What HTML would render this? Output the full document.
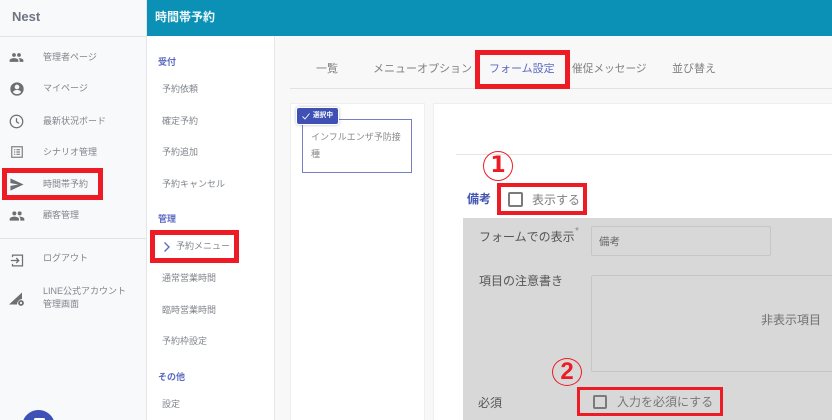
<!DOCTYPE html>
<html lang="ja"><head><meta charset="utf-8">
<style>
html,body{margin:0;padding:0;width:832px;height:420px;overflow:hidden}
body{position:relative;background:#f8f8f8;font-family:"Liberation Sans","Noto Sans CJK JP",sans-serif}
#w{position:absolute;left:0;top:0;width:832px;height:420px;overflow:hidden}
.a{position:absolute;box-sizing:border-box}
.t{position:absolute;white-space:nowrap;line-height:16px;font-size:9px;color:#80858c}
.r{position:absolute;box-sizing:border-box;border:5px solid #ed1c24}
svg{position:absolute}
</style></head><body><div id="w">
<div class="a" style="left:0;top:0;width:147px;height:420px;background:#f8f9fb;border-right:1px solid #e4e4e6"></div>
<div class="a" style="left:0;top:36px;width:146px;height:1px;background:#e4e4e6"></div>
<div class="a" style="left:147px;top:0;width:685px;height:36px;background:#0a91b5"></div>
<div class="a" style="left:147px;top:36px;width:128px;height:384px;background:#fff;border-right:1px solid #e8e8e8"></div>

<div class="t" style="left:12px;top:9px;font-size:13px;font-weight:bold;color:#6e7580">Nest</div>
<div class="t" style="left:155px;top:9px;font-size:12px;font-weight:bold;color:#eef8fb">時間帯予約</div>

<!-- sidebar icons -->
<svg style="left:9px;top:50px" width="15" height="15" viewBox="0 0 24 24" fill="#6d6f73"><path d="M16 11a3 3 0 1 0 0-6 3 3 0 0 0 0 6zm-8 0a3 3 0 1 0 0-6 3 3 0 0 0 0 6zm0 2c-2.300 0-7 1.200-7 3.500V19h14v-2.500C15 14.200 10.300 13 8 13zm8 0h-1c1.200.8 2 2 2 3.500V19h6v-2.500c0-2.300-4.700-3.500-7-3.500z"/></svg>
<svg style="left:9px;top:81px" width="16" height="16" viewBox="0 0 24 24" fill="#6d6f73"><path d="M12 2a10 10 0 1 0 0 20 10 10 0 0 0 0-20zm0 3.500a3.500 3.500 0 1 1 0 7 3.500 3.500 0 0 1 0-7zM12 19.600a7.600 7.600 0 0 1-6-3c.1-2 4-3.100 6-3.100s5.900 1.100 6 3.100a7.600 7.600 0 0 1-6 3z"/></svg>
<svg style="left:9px;top:114px" width="15" height="15" viewBox="0 0 24 24" fill="none" stroke="#6d6f73" stroke-width="2"><circle cx="12" cy="12" r="10"/><path d="M12 6.500V12.500L16 15"/></svg>
<svg style="left:10px;top:145px" width="14" height="14" viewBox="0 0 24 24" fill="none" stroke="#7a7c80" stroke-width="2"><rect x="3" y="3" width="18" height="18"/><path d="M7 8h2M11 8h6M7 12h2M11 12h6M7 16h2M11 16h6"/></svg>
<svg style="left:9px;top:175px" width="16" height="19" viewBox="0 0 17 20" fill="#6d6f73"><path d="M1.500 3.500 15.500 10 1.500 16.500V11.500L10 10 1.500 8.500z"/></svg>
<svg style="left:9px;top:208px" width="16" height="16" viewBox="0 0 24 24" fill="#6d6f73"><path d="M16 11a3 3 0 1 0 0-6 3 3 0 0 0 0 6zm-8 0a3 3 0 1 0 0-6 3 3 0 0 0 0 6zm0 2c-2.300 0-7 1.200-7 3.500V19h14v-2.500C15 14.200 10.300 13 8 13zm8 0h-1c1.200.8 2 2 2 3.500V19h6v-2.500c0-2.300-4.700-3.500-7-3.500z"/></svg>
<svg style="left:10px;top:253px" width="15" height="15" viewBox="0 0 18 18" fill="none" stroke="#6d6f73" stroke-width="1.500"><path d="M3 5V2.500H15V15.500H3V13"/><path d="M1 9H10M7.500 6 10.500 9 7.500 12"/></svg>
<svg style="left:8px;top:291px" width="18" height="18" viewBox="0 0 18 18" fill="#6d6f73"><path d="M1 13.500 14 1.500V8A5.500 5.500 0 0 0 9 13.500z"/><circle cx="13" cy="12" r="2" fill="none" stroke="#6d6f73" stroke-width="1.800"/></svg>

<div class="t" style="left:43px;top:49px">管理者ページ</div>
<div class="t" style="left:43px;top:80px">マイページ</div>
<div class="t" style="left:43px;top:113px">最新状況ボード</div>
<div class="t" style="left:43px;top:144px">シナリオ管理</div>
<div class="t" style="left:43px;top:176px">時間帯予約</div>
<div class="t" style="left:43px;top:207px">顧客管理</div>
<div class="a" style="left:0;top:238px;width:146px;height:1px;background:#e2e2e4"></div>
<div class="t" style="left:43px;top:250px">ログアウト</div>
<div class="t" style="left:43px;top:283px">LINE公式アカウント</div>
<div class="t" style="left:43px;top:296px">管理画面</div>
<svg style="left:22px;top:410px" width="33" height="10" viewBox="0 0 33 10"><path d="M1.330 10A16.500 16.500 0 0 1 31.670 10Z" fill="#3f51b5"/><path d="M12 10V9.500Q12 8 13.500 8H21.500Q23 8 23 9.500V10Z" fill="#fff"/></svg>

<!-- second column -->
<div class="t" style="left:158px;top:54px;color:#5c6bc0;font-weight:bold">受付</div>
<div class="t" style="left:162px;top:81px">予約依頼</div>
<div class="t" style="left:162px;top:113px">確定予約</div>
<div class="t" style="left:162px;top:144px">予約追加</div>
<div class="t" style="left:162px;top:176px">予約キャンセル</div>
<div class="t" style="left:158px;top:211px;color:#5c6bc0;font-weight:bold">管理</div>
<svg style="left:163px;top:241px" width="8" height="12" viewBox="0 0 8 12" fill="none" stroke="#5c6bc0" stroke-width="1.400"><path d="M1.500 1.500 6 6 1.500 10.500"/></svg>
<div class="t" style="left:176px;top:238px">予約メニュー</div>
<div class="t" style="left:162px;top:270px">通常営業時間</div>
<div class="t" style="left:162px;top:302px">臨時営業時間</div>
<div class="t" style="left:162px;top:333px">予約枠設定</div>
<div class="t" style="left:158px;top:369px;color:#5c6bc0;font-weight:bold">その他</div>
<div class="t" style="left:162px;top:396px">設定</div>

<!-- tabs -->
<div class="t" style="left:316px;top:61px;font-size:11px;color:#808080">一覧</div>
<div class="t" style="left:373px;top:61px;font-size:11px;color:#808080">メニューオプション</div>
<div class="t" style="left:489px;top:61px;font-size:11px;color:#5c6bc0">フォーム設定</div>
<div class="t" style="left:572px;top:61px;font-size:10.700px;color:#808080">催促メッセージ</div>
<div class="t" style="left:672px;top:61px;font-size:11px;color:#808080">並び替え</div>
<div class="a" style="left:290px;top:88px;width:542px;height:1px;background:#e2e2e2"></div>

<!-- left card -->
<div class="a" style="left:290px;top:103px;width:135px;height:317px;background:#fff;border:1px solid #eeeeee;border-bottom:0"></div>
<div class="a" style="left:302px;top:119px;width:110px;height:54px;background:#fff;border:1px solid #7580c4"></div>
<div class="t" style="left:311px;top:129px;font-size:9px;color:#8a8a8a">インフルエンザ予防接</div>
<div class="t" style="left:311px;top:146px;font-size:9px;color:#8a8a8a">種</div>
<div class="a" style="left:297px;top:108px;width:41px;height:16px;background:#3f51b5;border-radius:2px;box-shadow:0 0 0 1px #fff,0 0 3px 1px rgba(0,0,0,.25)"></div>
<svg style="left:301px;top:111px" width="10" height="10" viewBox="0 0 10 10" fill="none" stroke="#fff" stroke-width=".9"><path d="M1.500 5.500 4 8 8.500 2.500"/></svg>
<div class="t" style="left:313px;top:108px;font-size:6.700px;font-weight:bold;color:#fff">選択中</div>

<!-- main card -->
<div class="a" style="left:433px;top:103px;width:399px;height:317px;background:#fff;border:1px solid #eeeeee;border-right:0;border-bottom:0"></div>
<div class="a" style="left:456px;top:154px;width:376px;height:1px;background:#e4e4e4"></div>
<div class="t" style="left:467px;top:191px;font-size:12px;font-weight:bold;color:#4355b0">備考</div>
<div class="a" style="left:508px;top:192px;width:15px;height:15px;border:2px solid #7a7a7a;border-radius:2px"></div>
<div class="t" style="left:532px;top:192px;font-size:12px;color:#7d7d7d">表示する</div>

<!-- grey panel -->
<div class="a" style="left:463px;top:218px;width:369px;height:202px;background:#d8d8d8"></div>
<div class="t" style="left:479px;top:229px;font-size:12px;color:#555">フォームでの表示</div>
<div class="t" style="left:575px;top:224px;font-size:10px;color:#888">*</div>
<div class="a" style="left:591px;top:226px;width:180px;height:30px;border:1px solid #c6c6c6;border-radius:2px"></div>
<div class="t" style="left:599px;top:234px;font-size:10.500px;color:#666">備考</div>
<div class="t" style="left:479px;top:273px;font-size:12px;color:#555">項目の注意書き</div>
<div class="a" style="left:591px;top:275px;width:241px;height:97px;border:1px solid #c6c6c6;border-right:0;border-radius:2px 0 0 2px"></div>
<div class="t" style="left:761px;top:312px;font-size:12px;color:#707070">非表示項目</div>
<div class="t" style="left:478px;top:395px;font-size:12px;color:#555">必須</div>
<div class="a" style="left:593px;top:395px;width:14px;height:14px;border:2px solid #7a7a7a;border-radius:2px"></div>
<div class="t" style="left:617px;top:394px;font-size:12px;color:#777">入力を必須にする</div>

<!-- red annotations -->
<div class="r" style="left:2px;top:168px;width:101px;height:32px"></div>
<div class="r" style="left:150px;top:230px;width:89px;height:33px"></div>
<div class="r" style="left:475px;top:50px;width:95px;height:39px"></div>
<div class="r" style="left:497px;top:183px;width:90px;height:32px;border-width:4px"></div>
<div class="r" style="left:577px;top:387px;width:146px;height:29px;border-width:3px"></div>
<div class="a" style="left:483px;top:151px;width:30px;height:30px;border:1px solid #ed1c24;border-radius:50%"></div>
<div class="t" style="left:483px;top:151px;width:30px;line-height:30px;text-align:center;font-family:'DejaVu Sans',sans-serif;font-size:22px;font-weight:bold;color:#ed1c24">1</div>
<div class="a" style="left:552px;top:358px;width:30px;height:28px;border:1px solid #ed1c24;border-radius:50%"></div>
<div class="t" style="left:552px;top:358px;width:30px;line-height:28px;text-align:center;font-size:24px;font-weight:bold;color:#ed1c24">2</div>
</div></body></html>
